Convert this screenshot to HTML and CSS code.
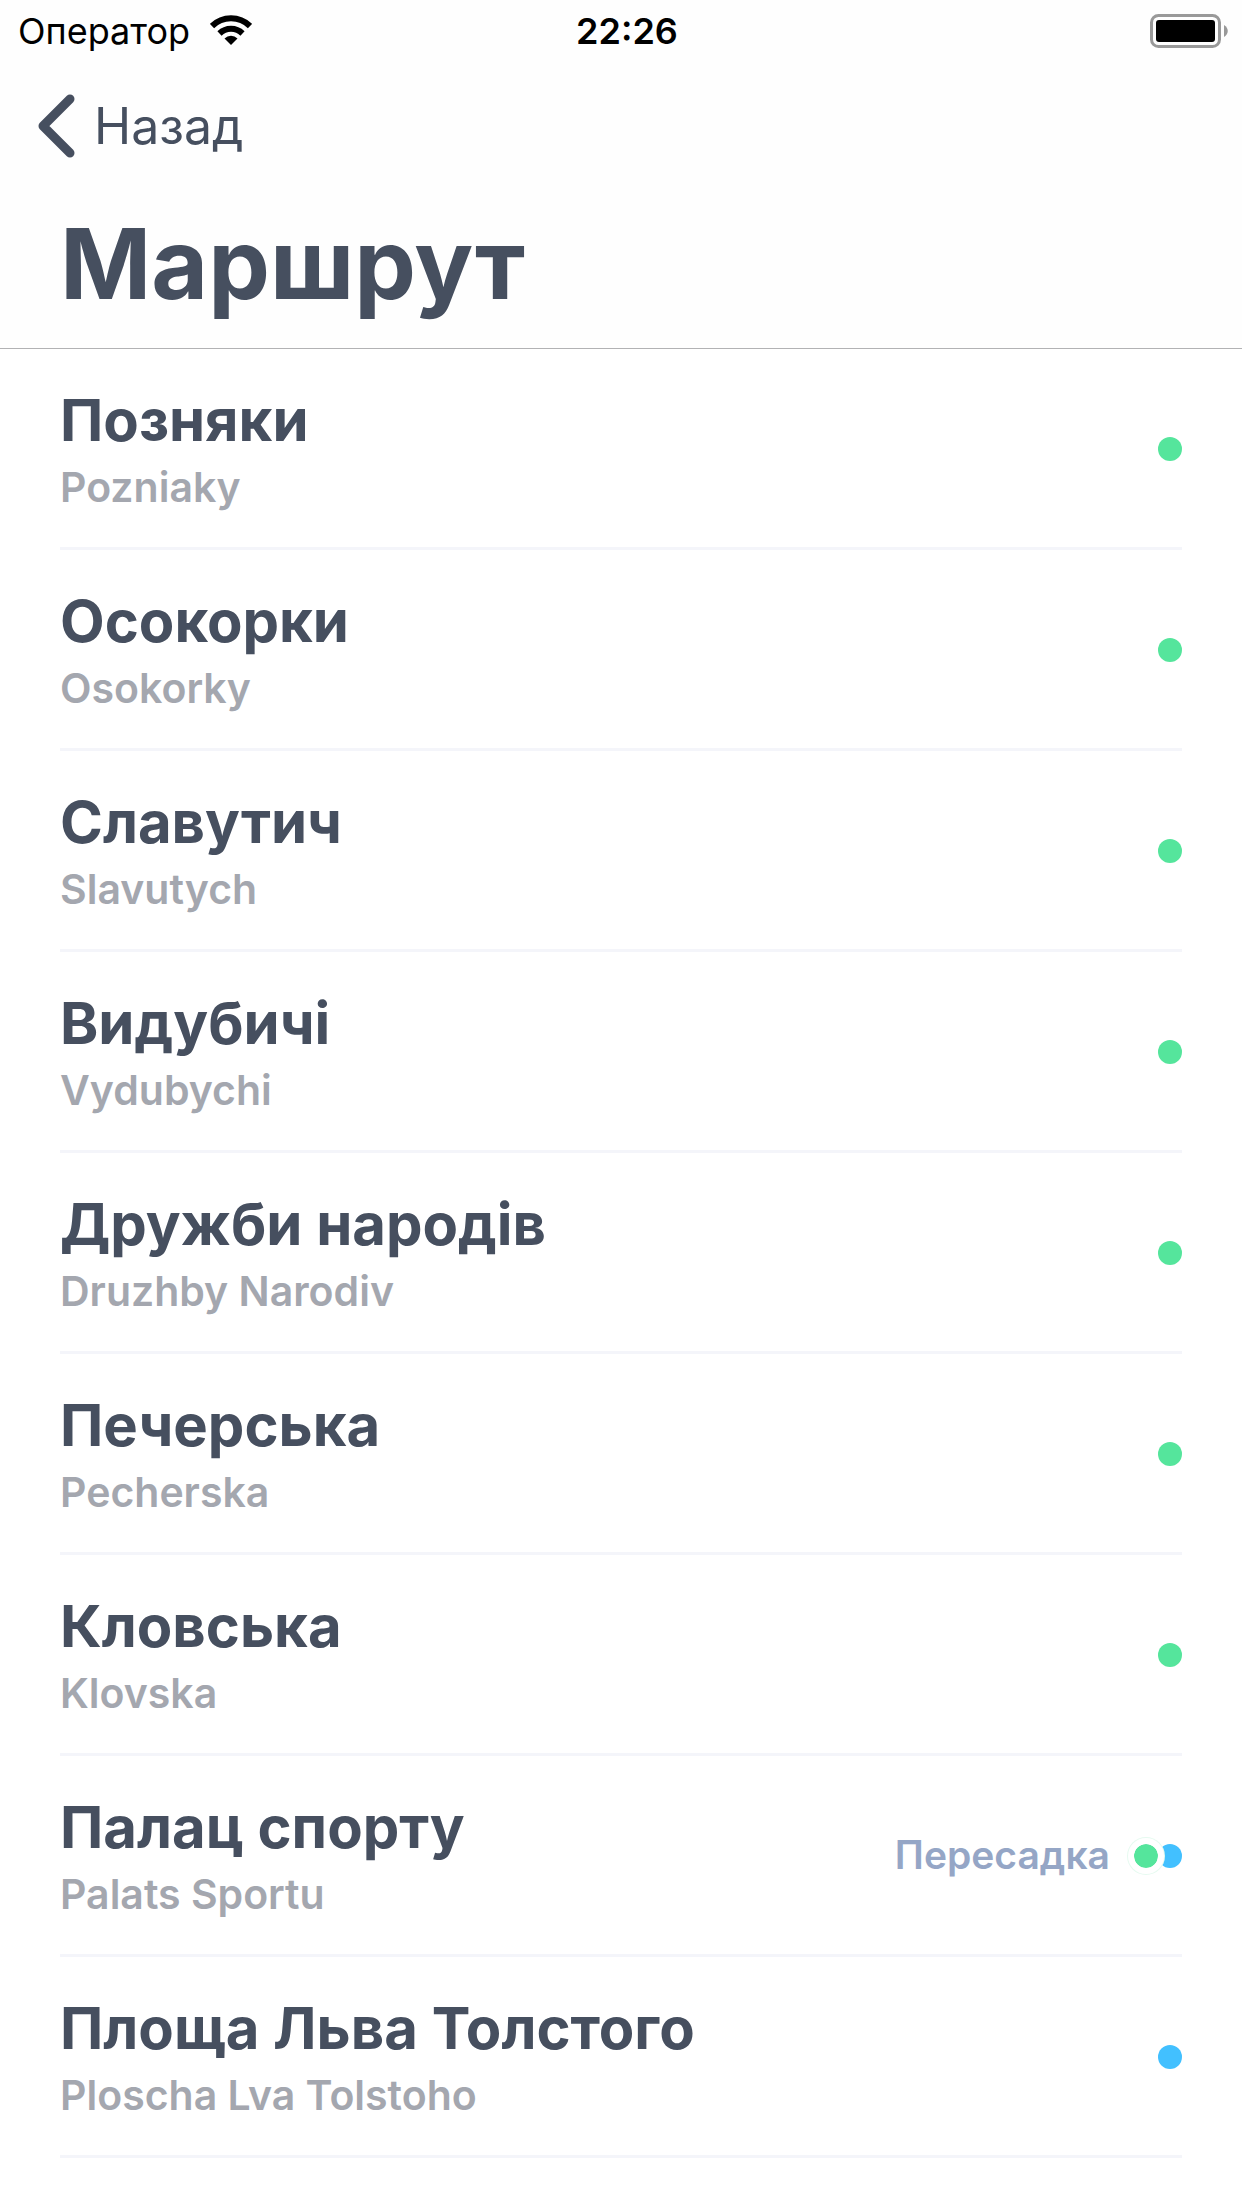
FILE: index.html
```html
<!DOCTYPE html>
<html lang="uk">
<head>
<meta charset="utf-8">
<meta name="viewport" content="width=device-width, initial-scale=1">
<title>Маршрут</title>
<link rel="stylesheet" href="styles.css">
</head>
<body>
<header class="header">
  <div class="status">
    <div class="carrier"><span>Оператор</span>
      <svg class="wifi" viewBox="0 0 42 30" aria-hidden="true"><path d="M21 30l-6.500-6.600a9.500 9.500 0 0 1 13 0z"/><path class="arc" d="M9.500 18.500a16.500 16.500 0 0 1 23 0"/><path class="arc" d="M2 11a27 27 0 0 1 38 0"/></svg>
    </div>
    <time class="clock">22:26</time>
    <div class="power">
      <svg class="battery" viewBox="0 0 78 34" aria-hidden="true"><rect class="shell" x="1.500" y="1.500" width="68" height="31" rx="7"/><rect x="6" y="6" width="59" height="22" rx="3"/><path class="tip" d="M74 11c5 3 5 9 0 12z"/></svg>
    </div>
  </div>
  <nav class="nav">
    <a class="back" href="#"><svg class="chevron" viewBox="0 0 38 64" aria-hidden="true"><path d="M33 5L6 32l27 27"/></svg>Назад</a>
  </nav>
  <h1 class="title">Маршрут</h1>
</header>
<main>
<ul class="stations">
  <li class="station"><div class="names"><h2 class="name">Позняки</h2><p class="latin">Pozniaky</p></div><span class="dot green"></span></li>
  <li class="station"><div class="names"><h2 class="name">Осокорки</h2><p class="latin">Osokorky</p></div><span class="dot green"></span></li>
  <li class="station"><div class="names"><h2 class="name">Славутич</h2><p class="latin">Slavutych</p></div><span class="dot green"></span></li>
  <li class="station"><div class="names"><h2 class="name">Видубичі</h2><p class="latin">Vydubychi</p></div><span class="dot green"></span></li>
  <li class="station"><div class="names"><h2 class="name">Дружби народів</h2><p class="latin">Druzhby Narodiv</p></div><span class="dot green"></span></li>
  <li class="station"><div class="names"><h2 class="name">Печерська</h2><p class="latin">Pecherska</p></div><span class="dot green"></span></li>
  <li class="station"><div class="names"><h2 class="name">Кловська</h2><p class="latin">Klovska</p></div><span class="dot green"></span></li>
  <li class="station"><div class="names"><h2 class="name">Палац спорту</h2><p class="latin">Palats Sportu</p></div><div class="transfer"><span class="label">Пересадка</span><span class="pair"><span class="dot green ringed"></span><span class="dot blue"></span></span></div></li>
  <li class="station"><div class="names"><h2 class="name">Площа Льва Толстого</h2><p class="latin">Ploscha Lva Tolstoho</p></div><span class="dot blue"></span></li>
</ul>
</main>
</body>
</html>
```
FILE: styles.css
```css
* { box-sizing: border-box; }
body { margin: 0; background: #fff; color: #464f5f; font-family: Inter, "Noto Sans", sans-serif; }
h1, h2, p, ul { margin: 0; padding: 0; }
.header { background: #fefefe; border-bottom: 1px solid #b2b2b4; }
.status { display: grid; grid-template-columns: 1fr auto 1fr; align-items: center; height: 60px; padding: 2px 14px 0 18px; color: #000; font-size: 36px; line-height: 44px; }
.carrier { display: flex; align-items: center; gap: 20px; }
.wifi { width: 42px; height: 30px; margin-bottom: 2px; }
.arc { fill: none; stroke: #000; stroke-width: 6; }
.clock { padding-left: 8px; font-weight: 600; }
.power { display: flex; justify-content: flex-end; }
.battery { width: 78px; height: 34px; }
.shell { fill: none; stroke: #999; stroke-width: 3; }
.tip { fill: #999; }
.nav { display: flex; padding: 32px 36px; }
.back { display: flex; align-items: center; gap: 18px; color: #464f5f; font-size: 50px; line-height: 68px; text-decoration: none; }
.chevron { width: 40px; height: 64px; fill: none; stroke: #464f5f; stroke-width: 9; stroke-linecap: round; stroke-linejoin: round; }
.title { padding: 16px 60px 28px; font-size: 98px; line-height: 112px; font-weight: 700; }
.stations { list-style: none; padding: 0 60px; }
.station { display: flex; align-items: center; justify-content: space-between; height: 201px; padding-top: 2px; border-bottom: 3px solid #f4f5fa; }
.names { padding-top: 4px; }
.name { font-size: 58px; line-height: 72px; font-weight: 700; }
.latin { color: #a4a7af; font-size: 41px; line-height: 62px; font-weight: 600; }
.dot { width: 24px; height: 24px; border-radius: 50%; }
.green { background: #55e59c; }
.blue { background: #42c0ff; }
.transfer { display: flex; align-items: center; gap: 18px; }
.label { padding-bottom: 2px; color: #95a6c6; font-size: 39px; line-height: 48px; font-weight: 600; }
.pair { display: flex; align-items: center; }
.ringed { box-sizing: content-box; border: 6px solid #fff; background-clip: padding-box; box-shadow: 0 0 0 1px #e6faf0; margin-right: -6px; z-index: 1; }
```
